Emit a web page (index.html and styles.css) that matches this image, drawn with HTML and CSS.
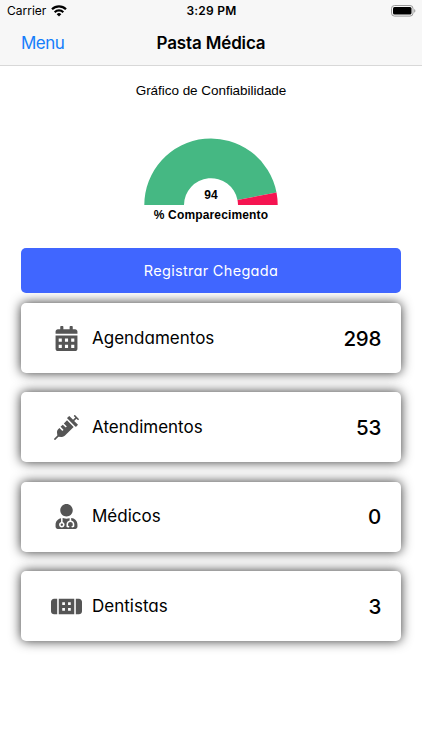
FILE: index.html
```html
<!DOCTYPE html>
<html lang="pt-BR">
<head>
    <meta charset="UTF-8">
    <meta name="viewport" content="width=device-width, initial-scale=1.0">
    <title>Pasta Médica</title>
    <link rel="stylesheet" href="styles.css">
</head>
<body>
    <header class="header">
        <div class="status-bar">
            <div class="carrier">
                <span>Carrier</span>
                <svg class="wifi" viewBox="0 0 16 12" fill="none" stroke="#000" stroke-width="2.2">
                    <path d="M1 4.3a10 10 0 0 1 14 0M3.7 7.2a6.1 6.1 0 0 1 8.6 0"/>
                    <path d="M8 11.5 5.7 9.2a3.3 3.3 0 0 1 4.6 0z" fill="#000" stroke="none"/>
                </svg>
            </div>
            <span class="time">3:29 PM</span>
            <svg class="battery" viewBox="0 0 25 12">
                <rect x=".5" y=".5" width="21.5" height="10.6" rx="3" fill="none" stroke="#999"/>
                <rect x="2" y="2" width="18.5" height="7.6" rx="1.5"/>
                <path d="M23.2 4v3.8c1.6-.7 1.6-3.1 0-3.8z" fill="#999"/>
            </svg>
        </div>
        <nav class="navbar">
            <a href="#" class="menu">Menu</a>
            <h1>Pasta Médica</h1>
        </nav>
    </header>

    <main class="content">
        <h2 class="chart-title">Gráfico de Confiabilidade</h2>
        <div class="chart">
            <svg class="gauge" viewBox="0 0 134 67">
                <path d="M.3 67a66.7 66.7 0 0 1 132.2-12.5L93.5 62A27 27 0 0 0 40 67z" fill="#45b883"/>
                <path d="M132.5 54.5A66.7 66.7 0 0 1 133.7 67H94a27 27 0 0 0-.5-5z" fill="#f51451"/>
            </svg>
            <span class="chart-value">94</span>
        </div>
        <p class="chart-label">% Comparecimento</p>

        <button class="button">Registrar Chegada</button>

        <div class="cards">
            <div class="card">
                <svg class="icon" viewBox="0 0 448 512"><path fill-rule="evenodd" d="M0 464c0 26.5 21.5 48 48 48h352c26.5 0 48-21.5 48-48V192H0zM64 256h64v64H64zm128 0h64v64h-64zm128 0h64v64h-64zM64 384h64v64H64zm128 0h64v64h-64zm128 0h64v64h-64zM400 64h-48V16c0-8.8-7.2-16-16-16h-32c-8.8 0-16 7.2-16 16v48H160V16c0-8.8-7.2-16-16-16h-32c-8.8 0-16 7.2-16 16v48H48C21.5 64 0 85.5 0 112v48h448v-48c0-26.5-21.5-48-48-48z"/></svg>
                <span class="name">Agendamentos</span>
                <span class="count">298</span>
            </div>
            <div class="card">
                <svg class="icon" viewBox="0 0 512 512"><path d="M201.5 174.8l55.7 55.8c3.1 3.1 3.1 8.2 0 11.3l-11.3 11.3c-3.1 3.1-8.2 3.1-11.3 0l-55.7-55.8-45.3 45.3 55.8 55.8c3.1 3.1 3.1 8.2 0 11.3l-11.3 11.3c-3.1 3.1-8.2 3.1-11.3 0L111 265.2l-26.4 26.4c-17.3 17.3-25.6 41.1-23 65.4l7.1 63.6L2.3 487c-3.1 3.1-3.1 8.2 0 11.3l11.3 11.3c3.1 3.1 8.2 3.1 11.3 0l66.3-66.3 63.6 7.1c23.9 2.6 47.9-5.4 65.4-23l181.9-181.9-135.7-135.7-64.9 65zm308.2-93.3L430.5 2.3c-3.1-3.1-8.2-3.1-11.3 0l-11.3 11.3c-3.1 3.1-3.1 8.2 0 11.3l28.3 28.3-45.3 45.3-56.6-56.6-17-17c-3.1-3.1-8.2-3.1-11.3 0l-33.9 33.9c-3.1 3.1-3.1 8.2 0 11.3l17 17L424.8 223l17 17c3.1 3.1 8.2 3.1 11.3 0l33.9-34c3.1-3.1 3.1-8.2 0-11.3l-73.5-73.5 45.3-45.3 28.3 28.3c3.1 3.1 8.2 3.1 11.3 0l11.3-11.3c3.1-3.2 3.1-8.2 0-11.4z"/></svg>
                <span class="name">Atendimentos</span>
                <span class="count">53</span>
            </div>
            <div class="card">
                <svg class="icon" viewBox="0 0 448 512"><path d="M224 256c70.7 0 128-57.3 128-128S294.7 0 224 0 96 57.3 96 128s57.3 128 128 128zM104 424c0 13.3 10.7 24 24 24s24-10.7 24-24-10.7-24-24-24-24 10.7-24 24zm216-135.4v49c36.5 7.4 64 39.8 64 78.4v41.7c0 7.6-5.4 14.2-12.9 15.7l-32.2 6.4c-4.3.9-8.5-1.9-9.4-6.3l-3.1-15.7c-.9-4.3 1.9-8.6 6.3-9.4l19.3-3.9V416c0-62.8-96-65.1-96 1.9v26.7l19.3 3.9c4.3.9 7.1 5.1 6.3 9.4l-3.1 15.7c-.9 4.3-5.1 7.1-9.4 6.3l-31.2-4.2c-7.9-1.1-13.8-7.8-13.8-15.9V416c0-38.6 27.5-70.9 64-78.4v-45.2c-2.2.7-4.4 1.1-6.6 1.9-18 6.3-37.3 9.8-57.4 9.8s-39.4-3.5-57.4-9.8c-7.4-2.6-14.9-4.2-22.6-5.2v81.6c23.1 6.9 40 28.1 40 53.4 0 30.9-25.1 56-56 56s-56-25.1-56-56c0-25.3 16.9-46.5 40-53.4v-80.4C48.5 301 0 355.8 0 422.4v44.8C0 491.9 20.1 512 44.8 512h358.4c24.7 0 44.8-20.1 44.8-44.8v-44.8c0-72-56.8-130.3-128-133.8z"/></svg>
                <span class="name">Médicos</span>
                <span class="count">0</span>
            </div>
            <div class="card">
                <svg class="icon" viewBox="0 0 640 512"><path fill-rule="evenodd" d="M0 160v192c0 35.3 28.7 64 64 64h64V96H64c-35.3 0-64 28.7-64 64zM576 96h-64v320h64c35.3 0 64-28.7 64-64V160c0-35.3-28.7-64-64-64zM160 96v320h320V96zm72 72h56v56h-56zm120 0h56v56h-56zM232 288h56v56h-56zm120 0h56v56h-56z"/></svg>
                <span class="name">Dentistas</span>
                <span class="count">3</span>
            </div>
        </div>
    </main>
</body>
</html>
```
FILE: styles.css
```css
* {
    margin: 0;
    padding: 0;
    box-sizing: border-box;
}

body {
    height: 750px;
    background: #fff;
    font-family: 'Inter', sans-serif;
    color: #000;
    overflow: hidden;
}

.header {
    height: 66px;
    background: #f7f7f7;
    border-bottom: 1px solid #d8d8d8;
}

.status-bar {
    display: grid;
    grid-template-columns: 1fr auto 1fr;
    align-items: center;
    height: 21px;
    padding: 0 6px 0 7px;
    font-size: 12px;
}

.carrier {
    display: flex;
    align-items: center;
    gap: 5px;
}

.wifi {
    width: 16px;
    height: 12px;
}

.time {
    font-weight: 600;
    letter-spacing: 0.25px;
}

.battery {
    width: 25px;
    height: 12px;
    justify-self: end;
}

.navbar {
    display: grid;
    grid-template-columns: 1fr auto 1fr;
    align-items: center;
    height: 43px;
    padding: 0 21px;
}

.menu {
    color: #157efb;
    font-size: 17px;
    letter-spacing: -0.5px;
    text-decoration: none;
}

h1 {
    font-size: 17px;
    font-weight: 600;
    line-height: 22px;
    letter-spacing: -0.15px;
}

.content {
    display: flex;
    flex-direction: column;
    padding: 15px 21px 0;
}

.chart-title {
    height: 20px;
    font: 400 13.5px/20px 'Liberation Sans', sans-serif;
    letter-spacing: -0.04px;
    text-align: center;
}

.chart {
    display: grid;
    justify-items: center;
    margin-top: 36.5px;
}

.gauge,
.chart-value {
    grid-area: 1 / 1;
}

.gauge {
    width: 134px;
    height: 67px;
}

.chart-value {
    align-self: end;
    font: bold 12px/20px 'Liberation Sans', sans-serif;
}

.chart-label {
    font: bold 12px/20px 'Liberation Sans', sans-serif;
    letter-spacing: 0.15px;
    text-align: center;
}

.button {
    height: 45px;
    margin-top: 23.5px;
    border: none;
    border-radius: 5px;
    background: #4066ff;
    color: #fff;
    font-family: 'Inter', sans-serif;
    font-size: 14.5px;
    font-feature-settings: 'cv11';
    letter-spacing: 0.3px;
}

.cards {
    display: flex;
    flex-direction: column;
    gap: 19.4px;
    margin-top: 10px;
}

.card {
    display: flex;
    align-items: center;
    height: 70px;
    padding: 0 20px 0 30px;
    border-radius: 5px;
    background: #fff;
    box-shadow: 0 0 12px rgba(0, 0, 0, 0.8);
    font-feature-settings: 'cv11';
}

/* keeps each shadow from falling over the blue button */
.button {
    position: relative;
    z-index: 1;
}

.icon {
    width: 31px;
    height: 25px;
    fill: #555;
}

.name {
    flex: 1;
    margin-left: 10px;
    font-size: 17px;
    line-height: 20px;
    padding-bottom: 1px;
}

.count {
    font-size: 20.5px;
    font-weight: 500;
    letter-spacing: -0.3px;
}
```
